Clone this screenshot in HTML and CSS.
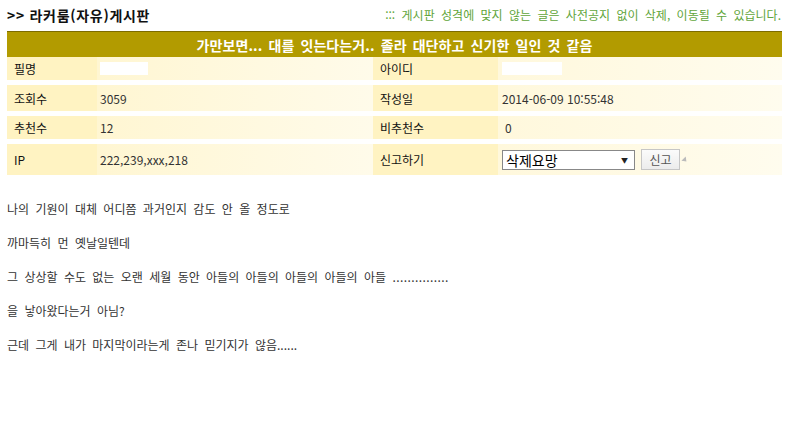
FILE: index.html
```html
<!DOCTYPE html>
<html lang="ko">
<head>
<meta charset="utf-8">
<link rel="stylesheet" href="styles.css">
</head>
<body>
<div class="page">
  <div class="top">
    <h1 class="title">&gt;&gt; 라커룸(자유)게시판</h1>
    <p class="notice">::: 게시판 성격에 맞지 않는 글은 사전공지 없이 삭제, 이동될 수 있습니다.</p>
  </div>
  <div class="subject">가만보면... 대를 잇는다는거.. 졸라 대단하고 신기한 일인 것 같음</div>
  <div class="info">
    <div class="lbl">필명</div>
    <div class="val"><span class="blank blank-a"></span></div>
    <div class="lbl lbl2">아이디</div>
    <div class="val val2"><span class="blank blank-b"></span></div>

    <div class="lbl">조회수</div>
    <div class="val">3059</div>
    <div class="lbl lbl2">작성일</div>
    <div class="val val2">2014-06-09 10:55:48</div>

    <div class="lbl">추천수</div>
    <div class="val">12</div>
    <div class="lbl lbl2">비추천수</div>
    <div class="val val2 zero">0</div>

    <div class="lbl tall">IP</div>
    <div class="val tall">222,239,xxx,218</div>
    <div class="lbl lbl2 tall">신고하기</div>
    <div class="val val2 tall">
      <div class="select"><span>삭제요망</span><span class="arrow">▼</span></div>
      <div class="btn">신고</div>
      <span class="tri"></span>
    </div>
  </div>
  <div class="content">
    <p>나의 기원이 대체 어디쯤 과거인지 감도 안 올 정도로</p>
    <p>까마득히 먼 옛날일텐데</p>
    <p>그 상상할 수도 없는 오랜 세월 동안 아들의 아들의 아들의 아들의 아들 <span class="dots">...............</span></p>
    <p>을 낳아왔다는거 아님?</p>
    <p>근데 그게 내가 마지막이라는게 존나 믿기지가 않음......</p>
  </div>
</div>
</body>
</html>
```

FILE: styles.css
```css
* { box-sizing: border-box; }
html, body { margin: 0; padding: 0; background: #fff; }
body {
  font-family: "Noto Sans CJK KR", "Noto Sans", sans-serif;
  font-size: 12px;
  color: #333;
}
.page { padding: 0 7px; width: 789px; }
.top {
  display: flex;
  justify-content: space-between;
  align-items: center;
  height: 31px;
  padding-bottom: 2px;
}
.title {
  margin: 0;
  font-size: 14px;
  font-weight: bold;
  color: #111;
  line-height: 1;
  letter-spacing: 0.7px;
}
.notice {
  margin: 0;
  font-size: 12px;
  color: #5fa53a;
  line-height: 1;
  padding-right: 1px;
  word-spacing: 3px;
}
.subject {
  width: 775px;
  height: 26px;
  background: #b29b00;
  border-top: 1px solid #7d6c00;
  color: #fff;
  font-weight: bold;
  font-size: 14px;
  display: flex;
  align-items: center;
  justify-content: center;
  line-height: 1;
  word-spacing: 2px;
  letter-spacing: 0.1px;
}
.info {
  width: 775px;
  display: grid;
  grid-template-columns: 90px 276px 125px 284px;
  grid-template-rows: 23px 26px 23px 31px;
  row-gap: 5px;
}
.lbl {
  background: #fff3c2;
  color: #111;
  display: flex;
  align-items: center;
  padding-left: 7px;
}
.lbl2 { padding-left: 7px; }
.val {
  background: linear-gradient(to right, #fff6d2, #fffbea);
  display: flex;
  align-items: center;
  padding-left: 3px;
  color: #333;
}
.val2 { padding-left: 4px; background: linear-gradient(to right, #fff8dc, #fffcee); }
.zero { padding-left: 7px; }
.blank { display: block; background: #fff; height: 13px; }
.blank-a { width: 48px; }
.blank-b { width: 60px; }
.select {
  width: 133px;
  height: 20px;
  border: 1px solid #888;
  background: #fff;
  display: flex;
  align-items: center;
  justify-content: space-between;
  padding: 0 6px 0 3px;
  font-size: 14px;
  color: #000;
}
.arrow { font-size: 7px; color: #222; }
.btn {
  margin-left: 6px;
  width: 39px;
  height: 21px;
  border: 1px solid #c6c6c6;
  background: linear-gradient(#fbfbfb, #ececec);
  color: #555;
  font-size: 12px;
  display: flex;
  align-items: center;
  justify-content: center;
}
.tri {
  margin-left: 3px;
  width: 0; height: 0;
  border-top: 3px solid transparent;
  border-bottom: 3px solid transparent;
  border-left: 4px solid #bbb;
  transform: rotate(45deg);
}
.content { padding-top: 26px; }
.content p {
  margin: 0 0 18px 0;
  line-height: 16px;
  color: #333;
  word-spacing: 3px;
}
.dots { letter-spacing: 0.4px; }
```
